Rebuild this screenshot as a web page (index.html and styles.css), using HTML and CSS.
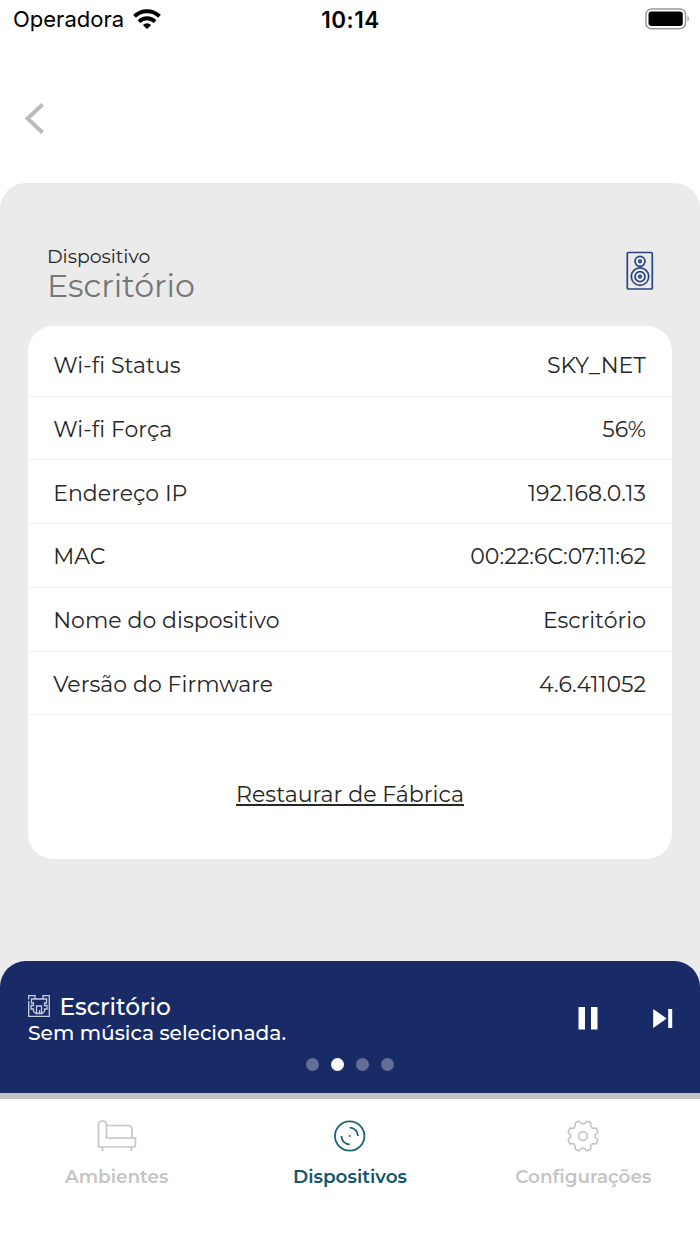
FILE: index.html
```html
<!DOCTYPE html>
<html lang="pt">
<head>
<meta charset="utf-8">
<title>Dispositivo</title>
<link rel="stylesheet" href="styles.css">
</head>
<body>
<div class="screen">
  <header class="status">
    <div class="carrier"><span class="carrier-name">Operadora</span>
      <svg width="28" height="20" viewBox="0 0 28 20"><g fill="none" stroke="#000" stroke-width="4"><path d="M1.500 7.300A18 18 0 0 1 26.500 7.300"/><path d="M6 12.600A11.500 11.500 0 0 1 22 12.600"/></g><path d="M9.800 16Q14 12.600 18.200 16L14 20Z"/></svg>
    </div>
    <div class="time">10:14</div>
    <svg class="battery" width="45" height="22" viewBox="0 0 45 22"><rect x=".9" y=".9" width="39.600" height="19.800" rx="5.500" fill="none" stroke="#999" stroke-width="1.500"/><rect x="3.500" y="3.500" width="34.300" height="14.500" rx="3"/><path d="M42.500 7.500Q45.400 10.800 42.500 14Z" fill="#999"/></svg>
  </header>
  <nav class="back"><svg width="20" height="32" viewBox="0 0 20 32"><path d="M17.500 1.500L2.500 15.500L17.500 29.500" fill="none" stroke="#b9b9c0" stroke-width="3.900"/></svg></nav>
  <main class="panel">
    <div class="heading">
      <div><div class="label">Dispositivo</div><h1 class="name">Escritório</h1></div>
      <svg class="speaker" width="28" height="40" viewBox="0 0 28 40"><g fill="none" stroke="#2c4482" stroke-width="1.700"><rect x="1.300" y="1.500" width="25" height="36.500" rx="1"/><circle cx="14" cy="10.300" r="5"/><circle cx="14" cy="10.300" r="1.300"/><circle cx="14" cy="25.600" r="8.700"/><circle cx="14" cy="25.600" r="5"/><circle cx="14" cy="25.600" r="1.300"/></g></svg>
    </div>
    <section class="card">
      <div class="row"><span>Wi-fi Status</span><span>SKY_NET</span></div>
      <div class="row"><span>Wi-fi Força</span><span>56%</span></div>
      <div class="row"><span>Endereço IP</span><span>192.168.0.13</span></div>
      <div class="row"><span>MAC</span><span>00:22:6C:07:11:62</span></div>
      <div class="row"><span>Nome do dispositivo</span><span>Escritório</span></div>
      <div class="row"><span>Versão do Firmware</span><span>4.6.411052</span></div>
      <a class="reset">Restaurar de Fábrica</a>
    </section>
  </main>
  <section class="player">
    <div class="track">
      <div class="info">
        <div class="room"><svg width="22" height="22" viewBox="0 0 22 22"><path d="M.7 4.500V.7H7V4H15V.7H21.300V21.300H.7V6M7 4H3.500V8H5.500V10.500H3V14H5.500V16.500L8 18.500H14L16.500 16.500V14H19V10.500H16.500V8H18.500V4H15M8.500 18V11H13.500V18M11.500 15V18" fill="none" stroke="#c5ccdf" stroke-width="1.300"/></svg><span>Escritório</span></div>
        <div class="song">Sem música selecionada.</div>
      </div>
      <svg class="controls" width="96" height="24" viewBox="0 0 96 24"><path d="M.5 1H7V23.500H.5ZM13 1H19.500V23.500H13ZM75.200 3L88.700 12.500L75.200 22ZM90.200 3H94.200V22H90.200Z" fill="#fff"/></svg>
    </div>
    <div class="dots"><i class="dot"></i><i class="dot on"></i><i class="dot"></i><i class="dot"></i></div>
  </section>
  <footer class="tabs">
    <div class="tab"><svg width="40" height="34" viewBox="0 0 40 34"><path d="M1.500 28V6Q1.500 2 5.500 2T9.500 6V19H38.500V25.500Q38.500 28 36 28ZM1.500 28H36M9.500 6.500H31Q35 6.500 35 10.500V19M5.500 28V32M34.500 28V32" fill="none" stroke="#c5c5c5" stroke-width="1.700"/></svg><span>Ambientes</span></div>
    <div class="tab active"><svg width="34" height="34" viewBox="0 0 34 34"><g fill="none" stroke="#1d6176" stroke-width="1.800"><circle cx="16.700" cy="17" r="14.700"/><path d="M16.700 8.700A8.300 8.300 0 0 1 25 17M16.700 25.300A8.300 8.300 0 0 1 8.400 17"/></g><circle cx="16.700" cy="17" r=".9" fill="#1d6176"/></svg><span>Dispositivos</span></div>
    <div class="tab"><svg width="34" height="34" viewBox="-17 -17 34 34"><defs><path id="tooth" d="M-4.600 -11.200Q-2.900 -11.800 -2.700 -13.700Q-2.600 -15.200 -1.500 -15.200H1.500Q2.600 -15.200 2.700 -13.700Q2.900 -11.800 4.600 -11.200"/></defs><g fill="none" stroke="#c5c5c5" stroke-width="1.700"><use href="#tooth" transform="rotate(22.500)"/><use href="#tooth" transform="rotate(67.500)"/><use href="#tooth" transform="rotate(112.500)"/><use href="#tooth" transform="rotate(157.500)"/><use href="#tooth" transform="rotate(202.500)"/><use href="#tooth" transform="rotate(247.500)"/><use href="#tooth" transform="rotate(292.500)"/><use href="#tooth" transform="rotate(337.500)"/><circle r="4.400"/></g></svg><span>Configurações</span></div>
  </footer>
</div>
</body>
</html>
```
FILE: styles.css
```css
* { box-sizing: border-box; }
body { margin: 0; background: #fff; font-family: Montserrat, Inter, sans-serif; color: #262626; }
svg { display: block; flex: none; }
.screen { width: 700px; height: 1244px; display: flex; flex-direction: column; overflow: hidden; white-space: nowrap; }
.status { height: 40px; display: grid; grid-template-columns: 1fr auto 1fr; align-items: center; padding: 0 11px 3px 13px; font-family: Inter, sans-serif; color: #000; }
.carrier { display: flex; gap: 9px; font-size: 22px; align-items: center; }
.carrier-name, .time { padding-top: 1px; }
.time { font-size: 22.400px; font-weight: 600; letter-spacing: .5px; margin-right: 1px; }
.battery { justify-self: end; margin-right: -1px; }
.back { height: 143.400px; flex: none; padding: 63px 0 0 24.500px; }
.panel { height: 801.600px; flex: none; background: #ebebeb; border-radius: 26px 26px 0 0; padding: 62px 28px 0; }
.heading { height: 81px; padding: 1px 18px 0 19px; display: flex; justify-content: space-between; }
.label { font-size: 18.900px; line-height: 21px; }
.name { margin: 0; font-size: 31.700px; line-height: 37px; font-weight: 400; color: #777; }
.speaker { margin-top: 5px; }
.card { height: 533px; background: #fff; border-radius: 25px; padding-top: 6.700px; display: flex; flex-direction: column; }
.row { height: 63.700px; flex: none; padding: 2.800px 26px 0 25.200px; display: flex; justify-content: space-between; align-items: center; border-bottom: 1.500px solid #efefef; font-size: 22px; letter-spacing: .04px; }
.reset { align-self: center; margin-top: 65.300px; font-size: 22.100px; line-height: 28px; text-decoration: underline; text-decoration-thickness: 1.500px; text-underline-offset: 2px; }
.player { height: 138px; flex: none; margin-top: -24px; background: #182b66; border-bottom: 6px solid #c2c2c2; border-radius: 26px 26px 0 0; padding: 31px 26px 0 28px; color: #fff; font-weight: 500; }
.track { display: flex; justify-content: space-between; }
.room { display: flex; align-items: center; gap: 9.500px; font-size: 23.400px; line-height: 29px; }
.room svg { margin-top: -1px; }
.song { font-size: 20.200px; line-height: 24px; }
.controls { margin-top: 14px; }
.dots { display: flex; justify-content: center; gap: 12px; margin: 13px 2px 0 0; }
.dot { width: 13px; height: 13px; border-radius: 50%; background: #626e97; }
.dot.on { background: #fff; }
.tabs { flex: 1; display: grid; grid-template-columns: repeat(3, 1fr); padding-top: 20px; font-size: 18.400px; font-weight: 600; color: #c5c5c5; }
.tab { display: flex; flex-direction: column; align-items: center; gap: 11px; line-height: 26px; }
.active { color: #12566b; }
```
